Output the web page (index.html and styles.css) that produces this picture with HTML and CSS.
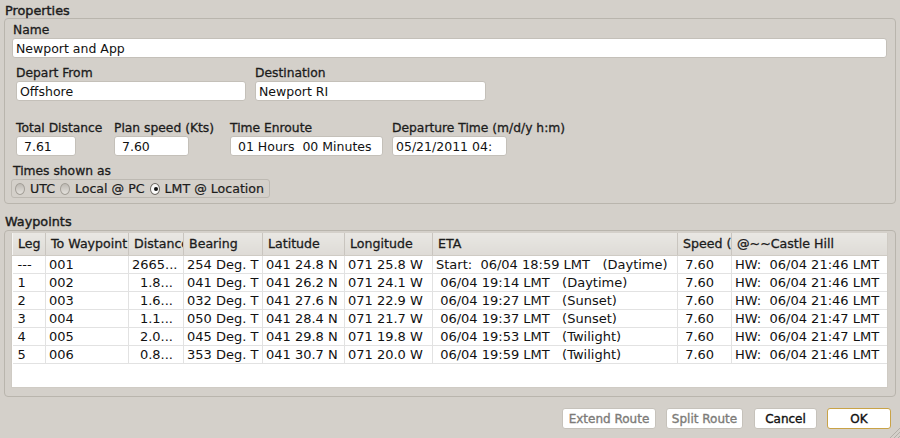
FILE: index.html
```html
<!DOCTYPE html>
<html>
<head>
<meta charset="utf-8">
<link rel="stylesheet" href="styles.css">
</head>
<body>
<div class="dialog">
  <div class="title">Properties</div>
  <div class="group props">
    <div class="label lbl-name">Name</div>
    <input class="field name-field" value="Newport and App">
    <div class="row row-route">
      <div class="col col-depart">
        <div class="label">Depart From</div>
        <input class="field w-depart" value="Offshore">
      </div>
      <div class="col col-dest">
        <div class="label">Destination</div>
        <input class="field w-dest" value="Newport RI">
      </div>
    </div>
    <div class="row row-stats">
      <div class="col col-dist">
        <div class="label">Total Distance</div>
        <input class="field w-dist" value=" 7.61">
      </div>
      <div class="col col-speed">
        <div class="label">Plan speed (Kts)</div>
        <input class="field w-speed" value=" 7.60">
      </div>
      <div class="col col-enroute">
        <div class="label">Time Enroute</div>
        <input class="field w-enroute" value=" 01 Hours  00 Minutes">
      </div>
      <div class="col col-depart-time">
        <div class="label">Departure Time (m/d/y h:m)</div>
        <input class="field w-deptime" value="05/21/2011 04:">
      </div>
    </div>
    <div class="label lbl-times">Times shown as</div>
    <div class="radio-group">
      <span class="radio"></span><span class="radio-text">UTC</span>
      <span class="radio"></span><span class="radio-text">Local @ PC</span>
      <span class="radio checked"></span><span class="radio-text">LMT @ Location</span>
    </div>
  </div>

  <div class="title title-wp">Waypoints</div>
  <div class="group waypoints">
    <div class="table-wrap">
      <table class="grid">
        <colgroup>
          <col class="c-leg"><col class="c-to"><col class="c-dist"><col class="c-bear"><col class="c-lat"><col class="c-lon"><col class="c-eta"><col class="c-spd"><col class="c-hw">
        </colgroup>
        <thead>
          <tr>
            <th>Leg</th><th>To Waypoint</th><th>Distance</th><th>Bearing</th><th>Latitude</th><th>Longitude</th><th>ETA</th><th>Speed (Kts)</th><th>@~~Castle Hill</th>
          </tr>
        </thead>
        <tbody>
          <tr><td>---</td><td>001</td><td class="num">2665...</td><td>254 Deg. T</td><td>041 24.8 N</td><td>071 25.8 W</td><td>Start:  06/04 18:59 LMT   (Daytime)</td><td> 7.60</td><td>HW:  06/04 21:46 LMT</td></tr>
          <tr><td>1</td><td>002</td><td class="num">1.8...</td><td>041 Deg. T</td><td>041 26.2 N</td><td>071 24.1 W</td><td> 06/04 19:14 LMT   (Daytime)</td><td> 7.60</td><td>HW:  06/04 21:46 LMT</td></tr>
          <tr><td>2</td><td>003</td><td class="num">1.6...</td><td>032 Deg. T</td><td>041 27.6 N</td><td>071 22.9 W</td><td> 06/04 19:27 LMT   (Sunset)</td><td> 7.60</td><td>HW:  06/04 21:46 LMT</td></tr>
          <tr><td>3</td><td>004</td><td class="num">1.1...</td><td>050 Deg. T</td><td>041 28.4 N</td><td>071 21.7 W</td><td> 06/04 19:37 LMT   (Sunset)</td><td> 7.60</td><td>HW:  06/04 21:47 LMT</td></tr>
          <tr><td>4</td><td>005</td><td class="num">2.0...</td><td>045 Deg. T</td><td>041 29.8 N</td><td>071 19.8 W</td><td> 06/04 19:53 LMT   (Twilight)</td><td> 7.60</td><td>HW:  06/04 21:47 LMT</td></tr>
          <tr><td>5</td><td>006</td><td class="num">0.8...</td><td>353 Deg. T</td><td>041 30.7 N</td><td>071 20.0 W</td><td> 06/04 19:59 LMT   (Twilight)</td><td> 7.60</td><td>HW:  06/04 21:46 LMT</td></tr>
        </tbody>
      </table>
    </div>
  </div>

  <div class="buttons">
    <button class="btn disabled b-extend">Extend Route</button>
    <button class="btn disabled b-split">Split Route</button>
    <button class="btn b-cancel">Cancel</button>
    <button class="btn default b-ok">OK</button>
  </div>
  <svg class="grip" width="12" height="12" viewBox="0 0 12 12">
    <line x1="12" y1="2" x2="2" y2="12" stroke="#b3afa8" stroke-width="1"/>
    <line x1="12" y1="6" x2="6" y2="12" stroke="#b3afa8" stroke-width="1"/>
    <line x1="12" y1="10" x2="10" y2="12" stroke="#b3afa8" stroke-width="1"/>
  </svg>
</div>
</body>
</html>
```
FILE: styles.css
```css
* { box-sizing: border-box; }
html, body { margin: 0; padding: 0; }
body {
  width: 900px;
  height: 438px;
  overflow: hidden;
  background: #d4d0ca;
  font-family: "DejaVu Sans", Verdana, sans-serif;
  font-size: 12px;
  color: #1c1c1c;
}
.dialog {
  position: relative;
  width: 900px;
  height: 438px;
  padding: 0 4px;
}
.title {
  height: 18px;
  line-height: 22px;
  padding-left: 1px;
  font-size: 12.8px;
  -webkit-text-stroke: 0.4px #1c1c1c;
}
.title-wp {
  height: 26px;
  padding-top: 10px;
  line-height: 16px;
}
.group {
  border: 1px solid #b9b5ad;
  border-radius: 4px;
}
.props {
  height: 186px;
  padding: 4px 0 0 7px;
}
.label {
  height: 14px;
  line-height: 14px;
  font-size: 12.3px;
  white-space: nowrap;
  -webkit-text-stroke: 0.3px #1c1c1c;
}
.lbl-name { padding-left: 1px; }
.field {
  display: block;
  height: 20px;
  margin-top: 1px;
  padding: 0 3px;
  border: 1px solid #c4c0b9;
  border-radius: 3px;
  background: #fff;
  font-family: "DejaVu Sans", Verdana, sans-serif;
  font-size: 12.5px;
  color: #111;
  white-space: pre;
  outline: none;
}
.name-field { width: 875px; }
.row { display: flex; }
.row-route { margin-top: 8px; padding-left: 4px; }
.row-route .col-depart { width: 239px; }
.w-depart { width: 230px; }
.w-dest { width: 231px; }
.row-stats { margin-top: 20px; padding-left: 4px; }
.col-dist { width: 98px; }
.w-dist { width: 60px; }
.col-speed { width: 116px; }
.w-speed { width: 75px; }
.col-enroute { width: 162px; }
.w-enroute { width: 153px; }
.w-deptime { width: 115px; }
.lbl-times { margin-top: 8px; padding-left: 1px; }
.radio-group {
  display: flex;
  align-items: center;
  width: 259px;
  height: 19px;
  margin-top: 1px;
  margin-left: -1px;
  padding-left: 3px;
  border: 1px solid #bdb9b2;
  border-radius: 3px;
  font-size: 12.6px;
}
.radio {
  display: inline-block;
  width: 12px;
  height: 12px;
  border-radius: 50%;
  border: 1px solid #a29e97;
  background: linear-gradient(#bdb9b3, #e4e1dc);
  margin-right: 5px;
  position: relative;
}
.radio.checked {
  background: linear-gradient(#f4f3f1, #ffffff);
  border-color: #6f6b65;
}
.radio.checked::after {
  content: "";
  position: absolute;
  left: 3px;
  top: 3px;
  width: 4px;
  height: 4px;
  border-radius: 50%;
  background: #111;
}
.radio-text {
  margin-right: 5px;
  white-space: nowrap;
  -webkit-text-stroke: 0.2px #1c1c1c;
}
.waypoints {
  height: 167px;
  padding: 2px 7px 0 6px;
}
.table-wrap {
  height: 155px;
  background: #fff;
  border: 1px solid #cfcbc4;
  border-top: none;
  overflow: hidden;
}
.grid {
  table-layout: fixed;
  border-collapse: collapse;
  width: 876px;
  font-size: 13px;
}
.c-leg { width: 33px; }
.c-to { width: 83px; }
.c-dist { width: 55px; }
.c-bear { width: 79px; }
.c-lat { width: 82px; }
.c-lon { width: 88px; }
.c-eta { width: 245px; }
.c-spd { width: 54px; }
.c-hw { width: 157px; }
.grid th {
  height: 22px;
  padding: 0 0 0 5px;
  text-align: left;
  font-weight: normal;
  font-size: 12.6px;
  background: linear-gradient(#e9e7e3, #dedbd6);
  border-left: 1px solid #f5f4f2;
  border-right: 1px solid #c9c5bf;
  border-bottom: 1px solid #cfcbc4;
  white-space: nowrap;
  overflow: hidden;
  text-overflow: clip;
  -webkit-text-stroke: 0.3px #1c1c1c;
}
.grid td {
  height: 18px;
  padding: 0 0 0 3px;
  border: 1px solid #e2e2e2;
  border-top: none;
  white-space: pre;
  overflow: hidden;
  color: #111;
}
.grid td:first-child { padding-left: 5px; border-left: none; }
.grid td.num { text-align: right; padding-right: 10px; }
.buttons {
  display: flex;
  justify-content: flex-end;
  gap: 10px;
  margin-top: 11px;
  padding-right: 5px;
}
.btn {
  height: 21px;
  padding: 0;
  border: 1px solid #c6c2bb;
  border-radius: 3px;
  background: #fff;
  font-family: "DejaVu Sans", Verdana, sans-serif;
  font-size: 12px;
  color: #111;
  -webkit-text-stroke: 0.35px #111;
}
.btn.disabled { color: #7d7b78; -webkit-text-stroke: 0.35px #7d7b78; }
.b-extend { width: 94px; }
.b-split { width: 77px; }
.b-cancel { width: 63px; margin-left: 1px; }
.b-ok { width: 64px; }
.btn.default { border-color: #c9a347; }
.grip {
  position: absolute;
  right: 0;
  bottom: 0;
}
```
